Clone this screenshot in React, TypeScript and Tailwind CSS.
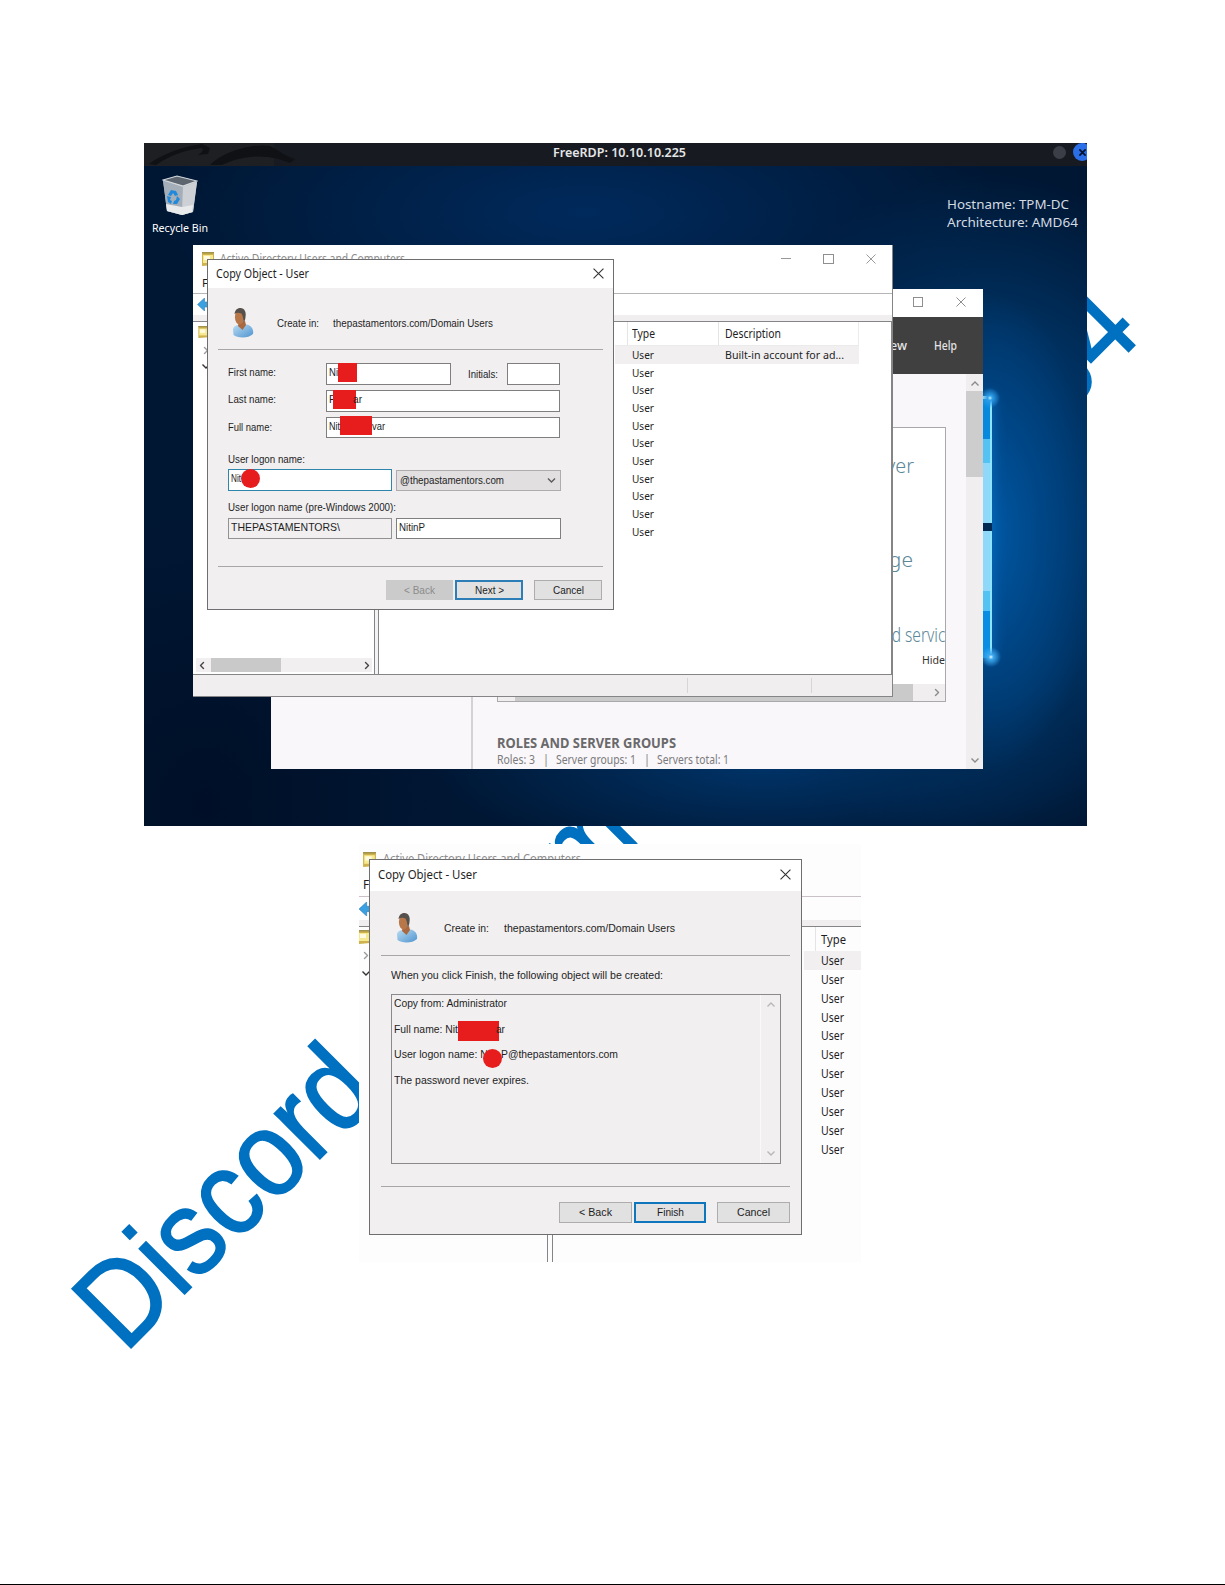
import React, { useLayoutEffect, useRef, useState } from "react";

/* Text squeezed or stretched horizontally to an exact width. */
function T({ w, className = "", children }: { w: number; className?: string; children: string }) {
  const ref = useRef<HTMLSpanElement>(null);
  const [k, setK] = useState(1);
  useLayoutEffect(() => {
    if (ref.current) setK(w / ref.current.getBoundingClientRect().width);
  }, []);
  return (
    <span className={"block shrink-0 whitespace-pre " + className} style={{ width: w }}>
      <span ref={ref} className="inline-block origin-left" style={{ transform: k === 1 ? undefined : `scaleX(${k})` }}>
        {children}
      </span>
    </span>
  );
}

const Cross = ({ className }: { className: string }) => (
  <svg viewBox="0 0 10 10" className={className} fill="none" stroke="currentColor" strokeWidth="1">
    <path d="M.5 .5l9 9M9.5 .5l-9 9" />
  </svg>
);

const Chevron = ({ className }: { className: string }) => (
  <svg viewBox="0 0 8 5" className={className} fill="none" stroke="currentColor" strokeWidth="1.4">
    <path d="M.5 .5L4 4L7.5 .5" />
  </svg>
);

const Person = ({ className }: { className: string }) => (
  <svg viewBox="0 0 22 30" className={className}>
    <defs>
      <linearGradient id="shirt" x1="0" y1="0" x2="1" y2="1">
        <stop offset="0" stopColor="#b9dcf3" />
        <stop offset="1" stopColor="#4f94cf" />
      </linearGradient>
    </defs>
    <path d="M1 21C2 18 4 17 7 17L14 16.500C19 17 22 21 21 26C16 31 5 30 1.500 27Z" fill="url(#shirt)" />
    <path d="M6.500 15L13 13L14 17L10.500 22L6 18Z" fill="#a9683f" />
    <ellipse cx="7.500" cy="9" rx="4.600" ry="7.500" fill="#b87748" />
    <path d="M2.500 6C3 1.500 6 0 8.500 0C12.500 0 14.500 4 13.500 9C13.300 12 12.500 13.500 11.500 14.500C11.500 11 11 8 9.500 5.500C7 4.500 4.500 4.500 2.500 6Z" fill="#55504c" />
  </svg>
);

const Folder = ({ className }: { className: string }) => (
  <svg viewBox="0 0 12 14" className={className}>
    <path d="M0 0H12V13L0 14Z" fill="#cdb24d" />
    <path d="M1 3H11V11H1Z" fill="#f6e98f" />
    <path d="M2 4H8V8H2Z" fill="#fffbe0" />
    <path d="M0 0H12V1.500H0Z" fill="#a3924c" />
  </svg>
);

const ArrowLeft = ({ className }: { className: string }) => (
  <svg viewBox="0 0 11 13" className={className}>
    <path d="M0 6.500L7 0V4H11V9H7V13Z" fill="#3ba0e0" stroke="#2a7fc0" strokeWidth=".6" />
  </svg>
);

const RecycleBin = () => (
  <svg viewBox="0 0 36 41" className="h-[41px] w-[36px]">
    <path d="M1 5L35 7L31 37L20 40L5 36Z" fill="#b9bfc6" />
    <path d="M1 5L21 12L20 40L5 36Z" fill="#a4aeb8" />
    <path d="M21 12L35 7L31 37L20 40Z" fill="#cdd0d4" />
    <path d="M4 29L20 32L31 30L30 37L20 40L5 36Z" fill="#e9eaec" />
    <path d="M1 5L15 1L35 6L21 11Z" fill="#5d656f" stroke="#d5dade" strokeWidth="1.200" />
    <g fill="#2089dc">
      <path d="M6 20L9 15L14 16L16 20L13 21L11 18L9 21Z" />
      <path d="M15 21L18 24L15 29L11 29L12 26L14 25Z" />
      <path d="M5 21L9 22L8 25L10 26L9 29L6 27Z" />
    </g>
  </svg>
);

const Box = ({ children, className }: { children: React.ReactNode; className: string }) => (
  <div className={"flex items-center justify-center " + className}>{children}</div>
);

const field = "flex items-center border border-[#7f7f80] bg-white pl-[2px]";

function DialogTitle({ w, className, x }: { w: number; className: string; x: string }) {
  return (
    <div className={"flex items-center justify-between bg-white pb-[2px] font-['Noto_Sans'] text-[#1f1f1f] " + className}>
      <T w={w}>Copy Object - User</T>
      <Cross className={x} />
    </div>
  );
}

function CopyDialogNames() {
  return (
    <div className="absolute left-[63px] top-[116px] flex h-[351px] w-[407px] flex-col border border-[#6e6e70] bg-[#f1eff0] font-['Liberation_Sans'] text-[11px] leading-[13px] text-[#1e1e1e]">
      <DialogTitle w={93} className="h-[28px] pl-[8px] pr-[9px] text-[12px]" x="h-[11px] w-[11px] text-[#333]" />
      <div className="mx-[10px] flex h-[62px] items-center border-b border-[#a8a7a8] pl-[14px] pt-[9px]">
        <Person className="mr-[23px] h-[30px] w-[22px]" />
        <T w={42} className="mr-[14px]">Create in:</T>
        <T w={160}>thepastamentors.com/Domain Users</T>
      </div>
      <div className="flex flex-col pl-[20px] pt-[13px]">
        <div className="flex h-[27px] items-start">
          <T w={48} className="mr-[50px] pt-[3px]">First name:</T>
          <div className={field + " h-[22px] w-[125px]"}>
            <T w={9} className="-mt-[3px]">Ni</T>
            <div className="-mt-[4px] h-[19px] w-[19px] bg-[#e71d1d]" />
          </div>
          <T w={30} className="ml-[17px] mr-[9px] pt-[5px]">Initials:</T>
          <div className={field + " h-[22px] w-[53px]"} />
        </div>
        <div className="flex h-[27px] items-start">
          <T w={48} className="mr-[50px] pt-[3px]">Last name:</T>
          <div className={field + " h-[22px] w-[234px]"}>
            <T w={7} className="-mr-[3px] -mt-[3px]">P</T>
            <div className="relative -mt-[4px] h-[19px] w-[23px] bg-[#e71d1d]" />
            <T w={9} className="-ml-[3px] -mt-[3px]">ar</T>
          </div>
        </div>
        <div className="flex h-[42px] items-start">
          <T w={44} className="mr-[54px] pt-[4px]">Full name:</T>
          <div className={field + " h-[21px] w-[234px]"}>
            <T w={11} className="-mt-[3px]">Nit</T>
            <div className="-mt-[4px] h-[19px] w-[32px] bg-[#e71d1d]" />
            <T w={13} className="-mt-[3px]">var</T>
          </div>
        </div>
        <T w={77} className="-mt-[6px] h-[10px]">User logon name:</T>
        <div className="mt-[6px] flex h-[22px] gap-[4px]">
          <div className="flex w-[164px] items-center border border-[#2f86ad] bg-white pl-[2px]">
            <T w={10} className="-mt-[3px]">Nit</T>
            <div className="-mt-[4px] h-[19px] w-[19px] rounded-full bg-[#e71d1d]" />
          </div>
          <div className="flex h-[21px] w-[165px] items-center justify-between self-end border border-[#adadad] bg-[#e1dfe0] pl-[3px] pr-[4px]">
            <T w={104}>@thepastamentors.com</T>
            <Chevron className="h-[5px] w-[9px] text-[#5c5c5c]" />
          </div>
        </div>
        <T w={168} className="mt-[10px]">User logon name (pre-Windows 2000):</T>
        <div className="mt-[4px] flex h-[21px] gap-[4px]">
          <div className="flex w-[164px] items-center border border-[#929193] pl-[2px]">
            <T w={109} className="-mt-[2px]">THEPASTAMENTORS\</T>
          </div>
          <div className={field + " w-[165px]"}>
            <T w={26} className="-mt-[2px]">NitinP</T>
          </div>
        </div>
      </div>
      <div className="mx-[10px] mt-[27px] border-t border-[#a8a7a8]" />
      <div className="mt-[13px] flex justify-end pr-[11px]">
        <Box className="mr-[2px] h-[20px] w-[67px] bg-[#cccbcc] text-[#8b8b8b]"><T w={31}>{"< Back"}</T></Box>
        <Box className="mr-[11px] h-[20px] w-[68px] border-2 border-[#2d7db6] bg-[#e1e1e1]"><T w={29}>{"Next >"}</T></Box>
        <Box className="h-[20px] w-[68px] border border-[#adadad] bg-[#e1e1e1]"><T w={31}>Cancel</T></Box>
      </div>
    </div>
  );
}

function CopyDialogFinish() {
  return (
    <div className="absolute left-[10px] top-[15px] flex h-[376px] w-[433px] flex-col border border-[#6e6e70] bg-[#f1eff0] font-['Liberation_Sans'] text-[11.500px] leading-[14px] text-[#1e1e1e]">
      <DialogTitle w={99} className="h-[31px] pl-[8px] pr-[10px] text-[12.500px]" x="h-[11px] w-[11px] text-[#333]" />
      <div className="mx-[11px] flex h-[65px] items-center border-b border-[#a8a7a8] pl-[15px] pt-[9px]">
        <Person className="mr-[26px] h-[32px] w-[22px]" />
        <T w={45} className="mr-[15px]">Create in:</T>
        <T w={171}>thepastamentors.com/Domain Users</T>
      </div>
      <T w={272} className="ml-[21px] mt-[12px]">When you click Finish, the following object will be created:</T>
      <div className="ml-[21px] mt-[12px] flex h-[170px] w-[390px] justify-between border border-[#8a898b]">
        <div className="flex flex-col gap-[11.700px] pl-[2px] pt-[1px]">
          <T w={113}>Copy from: Administrator</T>
          <div className="flex h-[14px] items-center">
            <T w={64}>Full name: Nit</T>
            <div className="relative mt-[4px] h-[20px] w-[41px] bg-[#e71d1d]" />
            <T w={9} className="-ml-[3px]">ar</T>
          </div>
          <div className="flex h-[14px] items-center">
            <T w={94} className="-mr-[5px]">User logon name: N</T>
            <div className="relative mt-[9px] h-[19px] w-[19px] rounded-full bg-[#e71d1d]" />
            <T w={117} className="-ml-[1px]">P@thepastamentors.com</T>
          </div>
          <T w={135}>The password never expires.</T>
        </div>
        <div className="flex w-[20px] flex-col items-center justify-between border-l border-[#faf8fa] py-[7px] text-[#b9b7b8]">
          <Chevron className="h-[5px] w-[8px] rotate-180" />
          <Chevron className="h-[5px] w-[8px]" />
        </div>
      </div>
      <div className="mx-[11px] mt-[22px] border-t border-[#a8a7a8]" />
      <div className="mt-[15px] flex h-[21px] justify-end pr-[11px]">
        <Box className="mr-[2px] w-[73px] border border-[#adadad] bg-[#e1e1e1] pb-[2px]"><T w={33}>{"< Back"}</T></Box>
        <Box className="mr-[11px] w-[72px] border-2 border-[#0f75bd] bg-[#e1e1e1] pb-[2px]"><T w={27}>Finish</T></Box>
        <Box className="w-[73px] border border-[#adadad] bg-[#e1e1e1] pb-[2px]"><T w={33}>Cancel</T></Box>
      </div>
    </div>
  );
}

function ServerManager() {
  return (
    <div className="absolute left-[127px] top-[146px] flex h-[480px] w-[712px] flex-col bg-[#f9f7fa] font-['Noto_Sans']">
      <div className="flex h-[28px] items-center justify-end gap-[33px] bg-white pb-[2px] pr-[17px] text-[#8f8f8f]">
        <div className="h-[10px] w-[10px] border border-[#8f8f8f]" />
        <Cross className="h-[10px] w-[10px]" />
      </div>
      <div className="flex h-[57px] items-center justify-end gap-[27px] bg-[#404040] pr-[26px] text-[12px] font-medium text-[#e6e6e6]">
        <T w={28}>View</T>
        <T w={23}>Help</T>
      </div>
      <div className="flex grow">
        <div className="w-[202px] border-r-2 border-[#d4d2d4]" />
        <div className="flex grow flex-col pl-[24px]">
          <div className="mt-[53px] flex h-[275px] w-[449px] flex-col items-end overflow-hidden border border-[#a9a8ab] bg-white text-[20px] font-light leading-[24px] text-[#5b8799]">
            <T w={56} className="mr-[31px] mt-[26px]">server</T>
            <T w={78} className="mr-[32px] mt-[70px]">manage</T>
            <T w={80} className="-mr-[9px] mt-[51px]">and service</T>
            <T w={23} className="mt-[6px] text-[11.500px] font-normal leading-[14px] text-[#333]">Hide</T>
            <div className="mt-auto flex h-[17px] w-full items-center bg-[#f0eeef] pl-[17px]">
              <div className="h-full w-[398px] bg-[#cacaca]" />
              <Chevron className="ml-[20px] h-[5px] w-[8px] -rotate-90 text-[#8b8b8b]" />
            </div>
          </div>
          <T w={179} className="mt-[32px] text-[14px] font-bold leading-[18px] text-[#6a696b]">ROLES AND SERVER GROUPS</T>
          <div className="flex text-[12px] leading-[15px] text-[#7b7a7c]">
            <T w={38}>Roles: 3</T>
            <T w={6} className="mx-[7.500px]">|</T>
            <T w={80}>Server groups: 1</T>
            <T w={6} className="mx-[7.500px]">|</T>
            <T w={72}>Servers total: 1</T>
          </div>
        </div>
        <div className="flex w-[17px] flex-col items-center bg-[#f0eeef] text-[#8b8b8b]">
          <Chevron className="mt-[7px] h-[5px] w-[8px] rotate-180" />
          <div className="mt-[5px] h-[86px] w-full bg-[#cdcdcd]" />
          <Chevron className="mb-[6px] mt-auto h-[5px] w-[8px]" />
        </div>
      </div>
    </div>
  );
}

const users = Array.from({ length: 11 }, (_, i) => i);

function DirectoryWindow() {
  return (
    <div className="absolute left-[49px] top-[102px] flex h-[452px] w-[700px] flex-col border-b border-r border-[#858487] bg-white font-['Noto_Sans'] text-[11.500px] text-[#1e1e1e]">
      <div className="flex h-[27px] items-center pl-[9px] pr-[16px] text-[#999]">
        <Folder className="mr-[6px] h-[14px] w-[12px]" />
        <T w={185} className="mr-auto text-[12px] text-[#8c8c8c]">Active Directory Users and Computers</T>
        <div className="h-px w-[10px] bg-[#999]" />
        <div className="ml-[32px] mr-[32px] h-[10px] w-[11px] border border-[#8f8f8f]" />
        <Cross className="h-[10px] w-[10px]" />
      </div>
      <div className="h-[22px] border-b border-[#b5b4b6] pl-[9px] pt-[2px] leading-[17px]">
        <T w={18}>File</T>
      </div>
      <div className="flex h-[21px] items-center pl-[4px]"><ArrowLeft className="h-[13px] w-[12px]" /></div>
      <div className="h-[6px] bg-[#f0eeef]" />
      <div className="flex h-[354px] gap-[3px] border-b border-[#858487] bg-[#f4f3f4]">
        <div className="flex w-[182px] flex-col border-r border-t border-[#858487] bg-white pb-[2px] pl-[3px]">
          <Folder className="ml-[2px] mt-[4px] h-[12px] w-[11px]" />
          <Chevron className="ml-[6px] mt-[10px] h-[5px] w-[8px] -rotate-90 text-[#9a9a9a]" />
          <Chevron className="ml-[6px] mt-[11px] h-[5px] w-[8px] text-[#333]" />
          <div className="mr-[2px] mt-auto flex h-[14px] items-center bg-[#f1eff0] text-[#444]">
            <Chevron className="ml-[2px] h-[5px] w-[8px] rotate-90" />
            <div className="ml-[5px] h-full w-[70px] bg-[#c9c9c9]" />
            <Chevron className="ml-auto mr-[1px] h-[5px] w-[8px] -rotate-90" />
          </div>
        </div>
        <div className="flex grow flex-col border-l border-r border-t border-[#858487] bg-white pl-[236px] pr-[32px]">
          <div className="flex h-[24px] items-center border-b border-r border-[#ecebec] text-[12px]">
            <div className="flex h-full w-[13px] border-r border-[#e5e4e5]" />
            <div className="flex h-full w-[91px] items-center border-r border-[#e5e4e5] pl-[4px]"><T w={23}>Type</T></div>
            <T w={56} className="ml-[6px]">Description</T>
          </div>
          {users.map((i) => (
            <div key={i} className={"flex h-[17.700px] items-center pl-[17px] leading-[16px] " + (i === 0 ? "bg-[#f1eff0]" : "")}>
              <T w={22} className="mr-[71px]">User</T>
              {i === 0 && <T w={119}>Built-in account for ad...</T>}
            </div>
          ))}
        </div>
      </div>
      <div className="flex grow bg-[#f0eeef] py-[3px]">
        <div className="w-[495px] border-r border-[#d7d6d7]" />
        <div className="w-[124px] border-r border-[#d7d6d7]" />
      </div>
    </div>
  );
}

function Desktop() {
  return (
    <section className="relative ml-[144px] mt-[143px] h-[683px] w-[943px] shrink-0 overflow-hidden bg-[#001734] bg-[radial-gradient(ellipse_110px_240px_at_845px_390px,#0058a4_0%,#004788_45%,transparent_100%),radial-gradient(ellipse_270px_340px_at_840px_370px,#003c74_0%,#00305f_55%,transparent_100%),radial-gradient(ellipse_420px_150px_at_440px_70px,#002a5c_0%,transparent_100%),radial-gradient(ellipse_330px_100px_at_620px_620px,#003469_0%,transparent_100%),radial-gradient(ellipse_260px_300px_at_60px_660px,#000f27_0%,transparent_100%)]">
      <div className="absolute left-[836px] top-[253px] flex h-[262px] w-[12px] flex-col border-r-2 border-[#8de4ff] bg-[#0a8ee4] shadow-[0_0_14px_#0a6fc0]">
        <div className="h-[3px] bg-[#c8f6ff]" />
        <div className="h-[40px] bg-[#078ade]" />
        <div className="h-[24px] bg-[#54c3f4]" />
        <div className="h-[60px] bg-[#90d8fa]" />
        <div className="-mr-[2px] h-[8px] bg-[#002a52]" />
        <div className="h-[60px] bg-[#90d8fa]" />
        <div className="h-[20px] bg-[#54c3f4]" />
      </div>
      <div className="absolute left-[835px] top-[502px] h-[24px] w-[24px] bg-[radial-gradient(circle,#e9fbff_0%,#3ea9ef_14%,transparent_60%)]" />
      <div className="absolute left-[834px] top-[243px] h-[24px] w-[24px] bg-[radial-gradient(circle,#b9f0ff_0%,#2d9ee9_14%,transparent_60%)]" />
      <header className="relative flex h-[23px] items-center bg-[#171a20] font-['Noto_Sans'] text-[12px] font-semibold text-[#e4e5e7]">
        <svg viewBox="0 0 155 23" className="h-[23px] w-[155px]">
          <rect width="130" height="23" fill="#1d1f23" />
          <path d="M5 21C20 10 38 4 58 1L66 5L64 11L54 12C58 9 60 7 58 5C42 7 26 12 12 22ZM66 22C78 9 108 0 126 3C136 8 142 14 151 16L146 20C132 14 108 8 78 22Z" fill="#0f1115" />
        </svg>
        <T w={133} className="-mt-[4px] ml-[254px]">FreeRDP: 10.10.10.225</T>
        <div className="-mt-[5px] ml-[367px] h-[13px] w-[13px] shrink-0 rounded-full bg-[#3b3e47]" />
        <div className="-mr-[6px] -mt-[5px] ml-[7px] flex h-[18px] w-[18px] shrink-0 items-center justify-center rounded-full bg-[#2a6fe8]">
          <Cross className="h-[7px] w-[7px] text-[#06142e] [stroke-width:2.500]" />
        </div>
      </header>
      <div className="relative flex justify-between font-['Noto_Sans'] text-white">
        <div className="flex w-[71px] flex-col items-center pt-[9px] text-[11.500px] leading-[16px]">
          <RecycleBin />
          <T w={56} className="mt-[4px]">Recycle Bin</T>
        </div>
        <div className="flex flex-col pr-[9px] pt-[29px] text-[13px] leading-[18px] text-[#d3dae2]">
          <T w={122}>Hostname: TPM-DC</T>
          <T w={131}>Architecture: AMD64</T>
        </div>
      </div>
      <ServerManager />
      <DirectoryWindow />
      <CopyDialogNames />
    </section>
  );
}

function FinishCapture() {
  return (
    <section className="relative ml-[359px] mt-[18px] h-[418px] w-[502px] shrink-0 overflow-hidden bg-[#fefdfe] font-['Noto_Sans'] text-[12px] text-[#1e1e1e]">
      <div className="flex h-[30px] items-center pl-[4px]">
        <Folder className="mr-[7px] h-[15px] w-[13px]" />
        <T w={198} className="text-[12.500px] text-[#8c8c8c]">Active Directory Users and Computers</T>
      </div>
      <div className="h-[23px] border-b border-[#c9c0c8] pl-[4px] leading-[22px]"><T w={19}>File</T></div>
      <div className="flex h-[23px] items-center pt-[1px]"><ArrowLeft className="h-[14px] w-[12px]" /></div>
      <div className="h-[6px] bg-[#f0eeef]" />
      <div className="flex h-[336px] gap-[4px]">
        <div className="flex w-[189px] flex-col border-r border-t border-[#858487]">
          <Folder className="-ml-px mt-[3px] h-[14px] w-[12px]" />
          <Chevron className="ml-[3px] mt-[9px] h-[5px] w-[8px] -rotate-90 text-[#9a9a9a]" />
          <Chevron className="ml-[3px] mt-[13px] h-[5px] w-[8px] text-[#333]" />
        </div>
        <div className="flex grow flex-col border-l border-t border-[#858487] pl-[251px]">
          <div className="flex h-[24px] text-[12.500px]">
            <div className="w-[12px] border-r border-[#e5e4e5]" />
            <T w={25} className="ml-[5px] pt-[4px]">Type</T>
          </div>
          {users.map((i) => (
            <div key={i} className={"flex h-[18.870px] items-center pl-[17px] leading-[17px] " + (i === 0 ? "bg-[#f1eff0]" : "")}>
              <T w={23}>User</T>
            </div>
          ))}
        </div>
      </div>
      <CopyDialogFinish />
    </section>
  );
}

/* Diagonal watermark lying behind both captures. */
function Watermark() {
  return (
    <div className="absolute left-[130.700px] top-[1349px] h-0 w-0 origin-top-left -rotate-45 whitespace-nowrap font-['Liberation_Sans'] text-[121px] leading-[0px] text-[#0070c0] [-webkit-text-stroke:1.800px_#0070c0]">
      <span className="absolute -left-[8px] -top-[43px] block origin-left scale-x-[0.888]">Discord</span>
      <span className="absolute left-[638px] -top-[40px] block origin-left scale-x-[0.87] text-[115px]">m</span>
      <span className="absolute left-[1315px] -top-[42px] block origin-left scale-x-[0.875]">34</span>
    </div>
  );
}

export default function App() {
  return (
    <main className="relative flex h-[1585px] w-[1225px] flex-col overflow-hidden border-b border-black bg-white">
      <Watermark />
      <Desktop />
      <FinishCapture />
    </main>
  );
}
